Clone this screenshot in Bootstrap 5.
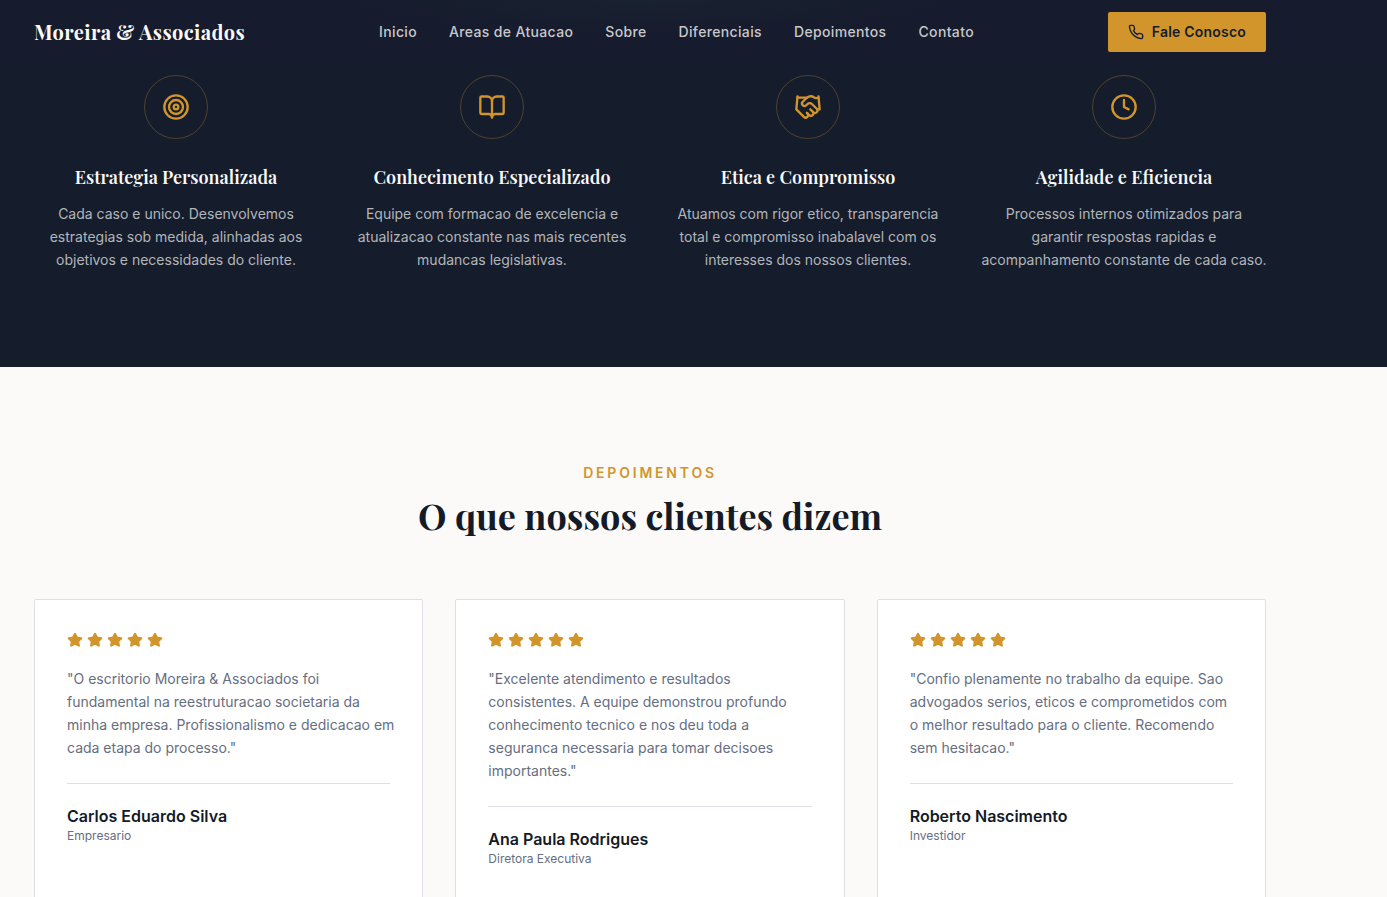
<!DOCTYPE html>
<html lang="pt-BR">
<head>
<meta charset="utf-8">
<meta name="viewport" content="width=device-width, initial-scale=1">
<title>Moreira &amp; Associados</title>
<link rel="stylesheet" href="https://cdn.jsdelivr.net/npm/bootstrap@5.3.0/dist/css/bootstrap.min.css">
<style>
:root{--navy:#151d2d;--gold:#d1952b;--cream:#fbfaf8;--muted:#666e7f;--line:#dddfe5}
body{font-family:Inter,"Liberation Sans",sans-serif;color:#141a27;background:var(--cream)}
.serif{font-family:"Playfair Display","Liberation Serif",serif}
.page-wrap{padding-right:87px}
.wrap{max-width:1280px;margin:0 auto;padding:0 24px}
svg{display:block;flex:none;fill:none;stroke:currentColor;stroke-width:2;stroke-linecap:round;stroke-linejoin:round}
.site-header{background:#161b2d}
.site-header .wrap{height:64px;background:radial-gradient(ellipse 340px 36px at 50% 0,#192231,#171e2e 50%,transparent)}
.brand{font-size:20px;line-height:28px;font-weight:700;letter-spacing:.4px;color:var(--cream)}
.menu{gap:32px}
.menu a{font-size:14px;line-height:20px;font-weight:500;letter-spacing:.35px;color:#c8c8ca}
.cta{background:var(--gold);color:var(--navy);font-size:14px;line-height:20px;font-weight:600;letter-spacing:.2px;border-radius:2px;padding:10px 20px;border:0}
.reasons{background:var(--navy);padding-top:75px;padding-bottom:96px}
.four{display:grid;grid-template-columns:repeat(4,minmax(0,1fr));gap:32px}
.ring{width:64px;height:64px;border:1px solid rgba(209,149,43,.3);color:var(--gold);margin:0 auto 24px}
.reasons h3{font-size:18px;line-height:28px;font-weight:600;color:var(--cream);margin-bottom:11px}
.reasons p{font-size:14px;line-height:23px;color:#b3b5b8;margin:0 -3px}
.quotes{padding-top:96px}
.eyebrow{font-size:14px;line-height:20px;font-weight:600;letter-spacing:2.8px;color:var(--gold);margin-bottom:12px}
.quotes h2{font-size:36px;line-height:40px;font-weight:700;margin-bottom:64px}
.three{display:grid;grid-template-columns:repeat(3,minmax(0,1fr));gap:32px}
.quote{border:1px solid var(--line);border-radius:2px;background:#fff;padding:32px;min-height:300px;margin:0}
.stars{color:var(--gold);gap:4px;margin-bottom:19px}
.stars svg{fill:currentColor}
.quote blockquote{font-size:14px;line-height:23px;color:var(--muted);margin:0 -6px 24px 0}
.quote figcaption{border-top:1px solid var(--line);padding-top:20px}
.person{font-size:16px;line-height:24px;font-weight:600}
.role{font-size:12px;line-height:16px;color:var(--muted)}
</style>
</head>
<body>
<svg width="0" height="0" class="position-absolute" aria-hidden="true"><defs>
<symbol id="star" viewBox="0 0 24 24"><path d="M11.525 2.295a.53.53 0 0 1 .95 0l2.31 4.679a2.123 2.123 0 0 0 1.595 1.16l5.166.756a.53.53 0 0 1 .294.904l-3.736 3.638a2.123 2.123 0 0 0-.611 1.878l.882 5.14a.53.53 0 0 1-.771.56l-4.618-2.428a2.122 2.122 0 0 0-1.973 0L6.396 21.01a.53.53 0 0 1-.77-.56l.881-5.139a2.122 2.122 0 0 0-.611-1.879L2.16 9.795a.53.53 0 0 1 .294-.906l5.165-.755a2.122 2.122 0 0 0 1.597-1.16z"/></symbol>
</defs></svg>

<header class="site-header fixed-top page-wrap">
<div class="wrap d-flex align-items-center justify-content-between">
<a class="brand serif text-decoration-none" href="#">Moreira &amp; Associados</a>
<nav class="menu d-flex">
<a class="text-decoration-none" href="#">Inicio</a>
<a class="text-decoration-none" href="#">Areas de Atuacao</a>
<a class="text-decoration-none" href="#">Sobre</a>
<a class="text-decoration-none" href="#">Diferenciais</a>
<a class="text-decoration-none" href="#depoimentos">Depoimentos</a>
<a class="text-decoration-none" href="#">Contato</a>
</nav>
<button type="button" class="cta d-flex align-items-center gap-2"><svg width="16" height="16" viewBox="0 0 24 24" aria-hidden="true"><path d="M22 16.92v3a2 2 0 0 1-2.18 2 19.79 19.79 0 0 1-8.63-3.07 19.5 19.5 0 0 1-6-6 19.79 19.79 0 0 1-3.07-8.67A2 2 0 0 1 4.11 2h3a2 2 0 0 1 2 1.72 12.84 12.84 0 0 0 .7 2.81 2 2 0 0 1-.45 2.11L8.09 9.91a16 16 0 0 0 6 6l1.27-1.27a2 2 0 0 1 2.11-.45 12.84 12.84 0 0 0 2.81.7A2 2 0 0 1 22 16.92z"/></svg>Fale Conosco</button>
</div>
</header>

<main>
<section class="reasons page-wrap">
<div class="wrap four text-center">
<article>
<div class="ring rounded-circle d-flex align-items-center justify-content-center"><svg width="28" height="28" viewBox="0 0 24 24" aria-hidden="true"><circle cx="12" cy="12" r="10"/><circle cx="12" cy="12" r="6"/><circle cx="12" cy="12" r="2"/></svg></div>
<h3 class="serif">Estrategia Personalizada</h3>
<p>Cada caso e unico. Desenvolvemos estrategias sob medida, alinhadas aos objetivos e necessidades do cliente.</p>
</article>
<article>
<div class="ring rounded-circle d-flex align-items-center justify-content-center"><svg width="28" height="28" viewBox="0 0 24 24" aria-hidden="true"><path d="M12 7v14"/><path d="M3 18a1 1 0 0 1-1-1V4a1 1 0 0 1 1-1h5a4 4 0 0 1 4 4 4 4 0 0 1 4-4h5a1 1 0 0 1 1 1v13a1 1 0 0 1-1 1h-6a3 3 0 0 0-3 3 3 3 0 0 0-3-3z"/></svg></div>
<h3 class="serif">Conhecimento Especializado</h3>
<p>Equipe com formacao de excelencia e atualizacao constante nas mais recentes mudancas legislativas.</p>
</article>
<article>
<div class="ring rounded-circle d-flex align-items-center justify-content-center"><svg width="28" height="28" viewBox="0 0 24 24" aria-hidden="true"><path d="m11 17 2 2a1 1 0 1 0 3-3"/><path d="m14 14 2.5 2.5a1 1 0 1 0 3-3l-3.88-3.88a3 3 0 0 0-4.24 0l-.88.88a1 1 0 1 1-3-3l2.81-2.81a5.79 5.79 0 0 1 7.06-.87l.47.28a2 2 0 0 0 1.42.25L21 4"/><path d="m21 3 1 11h-2"/><path d="M3 3 2 14l6.5 6.5a1 1 0 1 0 3-3"/><path d="M3 4h8"/></svg></div>
<h3 class="serif">Etica e Compromisso</h3>
<p>Atuamos com rigor etico, transparencia total e compromisso inabalavel com os interesses dos nossos clientes.</p>
</article>
<article>
<div class="ring rounded-circle d-flex align-items-center justify-content-center"><svg width="28" height="28" viewBox="0 0 24 24" aria-hidden="true"><circle cx="12" cy="12" r="10"/><path d="M12 6v6l4 2"/></svg></div>
<h3 class="serif">Agilidade e Eficiencia</h3>
<p>Processos internos otimizados para garantir respostas rapidas e acompanhamento constante de cada caso.</p>
</article>
</div>
</section>

<section class="quotes page-wrap" id="depoimentos">
<div class="wrap">
<p class="eyebrow text-center text-uppercase">Depoimentos</p>
<h2 class="serif text-center">O que nossos clientes dizem</h2>
<div class="three">
<figure class="quote">
<div class="stars d-flex" role="img" aria-label="5 de 5"><svg width="16" height="16"><use href="#star"/></svg><svg width="16" height="16"><use href="#star"/></svg><svg width="16" height="16"><use href="#star"/></svg><svg width="16" height="16"><use href="#star"/></svg><svg width="16" height="16"><use href="#star"/></svg></div>
<blockquote>"O escritorio Moreira &amp; Associados foi fundamental na reestruturacao societaria da minha empresa. Profissionalismo e dedicacao em cada etapa do processo."</blockquote>
<figcaption><div class="person">Carlos Eduardo Silva</div><div class="role">Empresario</div></figcaption>
</figure>
<figure class="quote">
<div class="stars d-flex" role="img" aria-label="5 de 5"><svg width="16" height="16"><use href="#star"/></svg><svg width="16" height="16"><use href="#star"/></svg><svg width="16" height="16"><use href="#star"/></svg><svg width="16" height="16"><use href="#star"/></svg><svg width="16" height="16"><use href="#star"/></svg></div>
<blockquote>"Excelente atendimento e resultados consistentes. A equipe demonstrou profundo conhecimento tecnico e nos deu toda a seguranca necessaria para tomar decisoes importantes."</blockquote>
<figcaption><div class="person">Ana Paula Rodrigues</div><div class="role">Diretora Executiva</div></figcaption>
</figure>
<figure class="quote">
<div class="stars d-flex" role="img" aria-label="5 de 5"><svg width="16" height="16"><use href="#star"/></svg><svg width="16" height="16"><use href="#star"/></svg><svg width="16" height="16"><use href="#star"/></svg><svg width="16" height="16"><use href="#star"/></svg><svg width="16" height="16"><use href="#star"/></svg></div>
<blockquote>"Confio plenamente no trabalho da equipe. Sao advogados serios, eticos e comprometidos com o melhor resultado para o cliente. Recomendo sem hesitacao."</blockquote>
<figcaption><div class="person">Roberto Nascimento</div><div class="role">Investidor</div></figcaption>
</figure>
</div>
</div>
</section>
</main>
<script src="https://cdn.jsdelivr.net/npm/bootstrap@5.3.0/dist/js/bootstrap.bundle.min.js"></script>
</body>
</html>
